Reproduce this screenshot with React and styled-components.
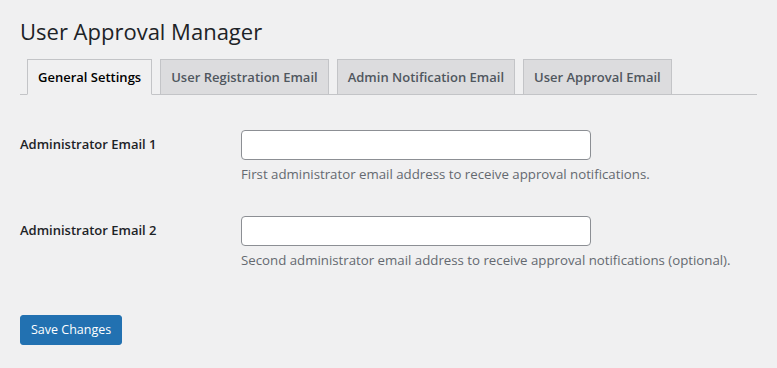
import styled, { createGlobalStyle } from 'styled-components';

const GlobalStyle = createGlobalStyle`
  html, body {
    margin: 0;
    padding: 0;
    background: #f0f0f1;
  }
  body {
    font-family: "Open Sans", "Noto Sans", sans-serif;
    color: #3c434a;
    font-size: 13px;
    line-height: 1.4;
  }
`;

const Wrap = styled.div`
  padding: 10px 20px 20px 20px;
`;

const Title = styled.h1`
  margin: 0;
  padding: 6px 0 4px;
  font-size: 22px;
  font-weight: 400;
  line-height: 30px;
  color: #1d2327;
`;

const TabBar = styled.nav`
  display: flex;
  gap: 8px;
  margin-top: 9px;
  padding-left: 7px;
  border-bottom: 1px solid #c3c4c7;
`;

const Tab = styled.a`
  display: block;
  margin-bottom: -1px;
  padding: 5px 10px;
  font-size: 13px;
  font-weight: 600;
  line-height: 24px;
  text-decoration: none;
  white-space: nowrap;
  border: 1px solid #c3c4c7;
  background: ${p => (p.$active ? '#f0f0f1' : '#dcdcde')};
  border-bottom-color: ${p => (p.$active ? '#f0f0f1' : '#c3c4c7')};
  color: ${p => (p.$active ? '#000' : '#50575e')};
  cursor: pointer;
`;

const Form = styled.form`
  margin-top: 20px;
`;

const Row = styled.div`
  display: grid;
  grid-template-columns: 211px 1fr;
`;

const Label = styled.label`
  padding: 20px 10px 20px 0;
  font-size: 13px;
  font-weight: 600;
  line-height: 18px;
  color: #1d2327;
`;

const Field = styled.div`
  padding: 15px 10px 16px;
`;

const Input = styled.input`
  box-sizing: border-box;
  display: block;
  width: 350px;
  height: 30px;
  margin: 0;
  padding: 0 8px;
  border: 1px solid #8c8f94;
  border-radius: 4px;
  background: #fff;
  font: inherit;
  font-size: 14px;
  color: #2c3338;
  outline: none;
`;

const Description = styled.p`
  margin: 5px 0 0;
  font-size: 13.25px;
  line-height: 19.5px;
  color: #646970;
`;

const Submit = styled.p`
  margin: 19px 0 0;
  padding: 10px 0;
`;

const Button = styled.button`
  box-sizing: border-box;
  min-height: 30px;
  padding: 0 10px;
  border: 1px solid #2271b1;
  border-radius: 3px;
  background: #2271b1;
  color: #fff;
  font-family: inherit;
  font-size: 12.5px;
  line-height: 28px;
  cursor: pointer;
`;

const tabs = [
  'General Settings',
  'User Registration Email',
  'Admin Notification Email',
  'User Approval Email',
];

const fields = [
  {
    id: 'admin_email_1',
    label: 'Administrator Email 1',
    desc: 'First administrator email address to receive approval notifications.',
  },
  {
    id: 'admin_email_2',
    label: 'Administrator Email 2',
    desc: 'Second administrator email address to receive approval notifications (optional).',
  },
];

const App = () => {
  return (
    <Wrap>
      <GlobalStyle />
      <Title>User Approval Manager</Title>
      <TabBar>
        {tabs.map((t, i) => (
          <Tab key={t} $active={i === 0}>{t}</Tab>
        ))}
      </TabBar>
      <Form onSubmit={e => e.preventDefault()}>
        {fields.map(f => (
          <Row key={f.id}>
            <Label htmlFor={f.id}>{f.label}</Label>
            <Field>
              <Input id={f.id} type="email" />
              <Description>{f.desc}</Description>
            </Field>
          </Row>
        ))}
        <Submit>
          <Button type="submit">Save Changes</Button>
        </Submit>
      </Form>
    </Wrap>
  );
};

export default App;
